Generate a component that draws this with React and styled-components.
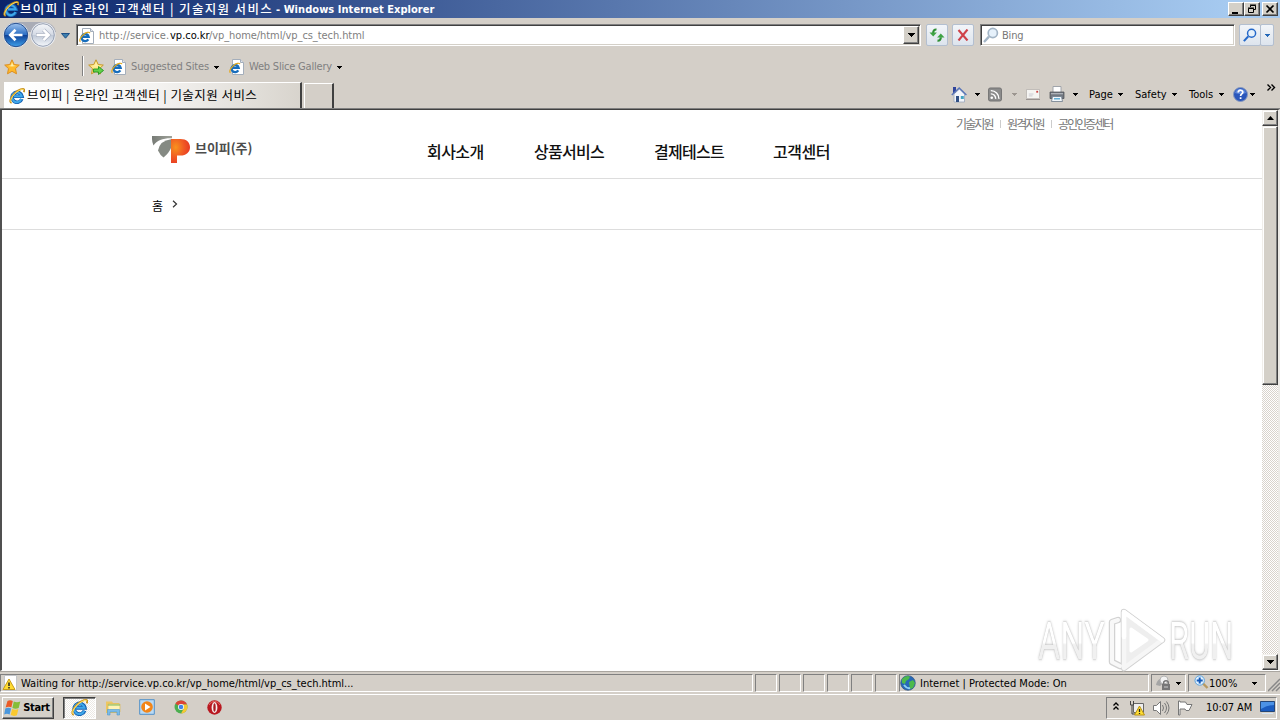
import React from "react";
import styled, { createGlobalStyle } from "styled-components";

const Global = createGlobalStyle`
  * { box-sizing: border-box; }
  html, body { margin: 0; padding: 0; overflow: hidden; }
  body { font-family: "DejaVu Sans Condensed", "DejaVu Sans", "Noto Sans CJK KR", sans-serif; font-stretch: condensed; font-size: 11px; color: #000; }
  svg { display: block; flex: none; }
`;

const Window = styled.div`
  width: 1280px; height: 720px; display: flex; flex-direction: column;
  background: #d4cfc8; overflow: hidden;
`;
const Label = styled.span`
  display: block; flex: none; white-space: nowrap;
  width: ${p => p.$w}px; margin-left: ${p => p.$ml || 0}px; padding-top: ${p => p.$pt ?? 2}px;
  line-height: 14px; font-size: ${p => p.$size || 11}px;
  letter-spacing: ${p => p.$ls || 0}px; color: ${p => p.$color || "#000"};
  font-weight: ${p => p.$weight || 400};
`;
const Korean = styled(Label)`
  padding-top: ${p => p.$pt || 0}px;
  font-family: "Noto Sans CJK KR", sans-serif;
`;
const Slot = styled.div`
  flex: none; margin-left: ${p => p.$ml || 0}px; margin-top: ${p => p.$mt || 0}px;
`;

/* ---------- title bar ---------- */
const TitleBar = styled.div`
  height: 18px; flex: none; display: flex; align-items: center; padding: 0 2px 0 3px;
  background: linear-gradient(90deg, #0a246a 0%, #a6caf0 96%);
`;
const Caption = styled.button`
  width: 16px; height: 14px; flex: none; padding: 0; display: flex; align-items: center; justify-content: center;
  background: #d4d0c8; border: 1px solid; border-color: #fff #404040 #404040 #fff;
  box-shadow: inset -1px -1px #808080; margin-left: ${p => p.$ml || 0}px;
`;

/* ---------- navigation ---------- */
const NavBar = styled.div`height: 34px; flex: none; display: flex; align-items: center; padding-left: 2px;`;
const Field = styled.div`
  height: 22px; flex: none; width: ${p => p.$w}px; margin-left: ${p => p.$ml}px;
  display: flex; align-items: center; background: #fff; border: 1px solid;
  border-color: #808080 #fff #fff #808080; box-shadow: inset 1px 1px #404040, inset -1px -1px #d4d0c8;
  padding-left: 3px;
`;
const DropButton = styled.button`
  width: 16px; height: 18px; padding: 0; flex: none; margin-left: auto; margin-right: 1px;
  display: flex; align-items: center; justify-content: center; background: #d4d0c8;
  border: 1px solid; border-color: #fff #404040 #404040 #fff; box-shadow: inset -1px -1px #808080;
`;
const SoftButton = styled.button`
  width: ${p => p.$w || 22}px; height: 22px; flex: none; padding: 0; margin-left: ${p => p.$ml || 0}px;
  display: flex; align-items: center; justify-content: center; border: 1px solid #b3bfd0;
  border-radius: 2px; background: linear-gradient(#f2f5f9, #dde4ed);
`;

/* ---------- favourites and tabs ---------- */
const FavBar = styled.div`height: 28px; flex: none; display: flex; align-items: center; padding-left: 4px;`;
const Divider = styled.div`width: 2px; height: 20px; margin-left: ${p => p.$ml}px; border-left: 1px solid #808080; border-right: 1px solid #fff;`;
const TabBar = styled.div`height: 29px; flex: none; display: flex; align-items: flex-end; border-bottom: 1px solid #808080; padding-left: 4px;`;
const Tab = styled.div`
  width: 298px; height: 26px; flex: none; display: flex; align-items: center; padding-left: 5px;
  background: linear-gradient(90deg, #fff 0%, #f5f4f2 50%, #d8d4cd 100%);
  border-top: 1px solid #fff; border-right: 2px solid #404040;
`;
const NewTab = styled.div`
  width: 30px; height: 25px; margin-left: 2px; flex: none; border: 1px solid #fff; border-bottom: 0; border-right: 2px solid #404040;
`;
const Commands = styled.div`height: 28px; display: flex; align-items: center; margin-left: 617px;`;

/* ---------- page ---------- */
const Viewport = styled.div`
  height: 562px; flex: none; display: flex; position: relative; border-left: 2px solid #505050;
  border-top: 1px solid #404040; border-bottom: 1px solid #fff; border-right: 2px solid #eceae6;
`;
const Page = styled.main`width: 1260px; flex: none; background: #fff;`;
const Header = styled.header`height: 69px; display: flex; border-bottom: 1px solid #ddd; padding-left: 150px;`;
const Brand = styled.div`display: flex; align-items: center; height: 28px; margin-top: 25px; width: 275px;`;
const Menu = styled.nav`display: flex; margin-top: 29px; height: 24px; align-items: center; width: 529px;`;
const Links = styled.div`display: flex; align-items: center; height: 16px; margin-top: 6px;`;
const Bar = styled.i`width: 1px; height: 8px; background: #ccc; margin: -1px 0 0 ${p => p.$ml}px;`;
const Crumbs = styled.div`height: 51px; display: flex; align-items: center; border-bottom: 1px solid #ddd; padding: 3px 0 0 150px;`;
const Scroll = styled.div`
  width: 16px; flex: none; display: flex; flex-direction: column; justify-content: space-between;
  background: repeating-conic-gradient(#fff 0 25%, #d9d3cc 0 50%) 0 0 / 2px 2px;
`;
const ScrollButton = styled.button`
  width: 16px; height: 16px; padding: 0; display: flex; align-items: center; justify-content: center;
  background: #d4d0c8; border: 1px solid; border-color: #f4f2ee #404040 #404040 #f4f2ee; box-shadow: inset -1px -1px #808080, inset 1px 1px #fff;
`;
const Thumb = styled.div`
  height: 259px; background: #d4d0c8; border: 1px solid; border-color: #f0eeea #404040 #404040 #f0eeea;
  box-shadow: inset -1px -1px #808080, inset 1px 1px #fff;
`;
const Watermark = styled.div`
  position: absolute; left: 1036px; top: 497px; width: 200px; height: 66px; display: flex; align-items: center;
`;
const MarkBox = styled.div`width: ${p => p.$w}px; flex: none; margin-left: ${p => p.$ml || 0}px;`;
const MarkWord = styled.div`
  width: max-content; padding-top: 3px; font: 400 51px/40px Roboto, sans-serif; white-space: nowrap;
  filter: drop-shadow(0 0 1px #bdbdbd) drop-shadow(0 0 1.500px #d0d0d0); transform: scaleX(${p => p.$sx}); transform-origin: 0 50%;
  background: linear-gradient(#fff 55%, #f0f0f0 60%); background-clip: text; -webkit-text-fill-color: transparent;
`;

/* ---------- status and task bars ---------- */
const StatusBar = styled.div`height: 23px; flex: none; display: flex; align-items: center; border-top: 1px solid #aaa6a0;`;
const Panel = styled.div`
  width: ${p => p.$w}px; height: 18px; flex: none; margin-right: 2px; display: flex; align-items: center;
  border: 1px solid; border-color: #808080 #fff #fff #808080;
`;
const TaskBar = styled.div`height: 26px; flex: none; display: flex; align-items: center; border-top: 1px solid #fff; padding-left: 2px;`;
const Start = styled.button`
  width: 52px; height: 22px; padding: 0 0 0 1px; flex: none; display: flex; align-items: center; color: #000; font: inherit;
  background: #d4d0c8; border: 1px solid; border-color: #fff #404040 #404040 #fff; box-shadow: inset -1px -1px #808080;
`;
const ActiveTask = styled.div`
  width: 33px; height: 22px; margin-left: 9px; display: flex; align-items: center; justify-content: center;
  border: 1px solid; border-color: #404040 #fff #fff #404040; box-shadow: inset 1px 1px #808080;
  background: repeating-conic-gradient(#fff 0 25%, #ece9e4 0 50%) 0 0 / 2px 2px;
`;
const Tray = styled.div`
  width: 171px; height: 22px; margin-left: 884px; display: flex; flex: none; align-items: center; border: 1px solid; border-color: #808080 #fff #fff #808080;
`;

/* ---------- drawings ---------- */
const Down = ({ color = "#000" }) => (
  <svg width="7" height="4" viewBox="0 0 7 4" shapeRendering="crispEdges"><path d="M1 1h5v1H1zM2 2h3v1H2zM3 3h1v1H3z" fill={color} /></svg>
);
const Wedge = () => (
  <svg width="7" height="4" viewBox="0 0 7 4" shapeRendering="crispEdges"><path d="M0 0h7v1H0zM1 1h5v1H1zM2 2h3v1H2zM3 3h1v1H3z" /></svg>
);
const IE = ({ s = 16 }) => (
  <svg width={s} height={s} viewBox="0 0 16 16" fill="none">
    <path d="M12.800 11A5 5 0 1 1 13 8.300H5" stroke="#1663b4" strokeWidth="3.600" />
    <path d="M12.400 11.200A4.900 4.900 0 1 1 12.700 8.300H5" stroke="#3fa8ea" strokeWidth="1.900" />
    <path d="M2.600 14.900C-.5 14 2.200 8.700 5.800 5.100 9.500 1.600 14.300-.2 15.200 1.600c.2.800-.1 1.800-.5 2.600" stroke="#c88f18" strokeWidth="1.700" />
    <path d="M2.200 14.300C1 12.700 2.600 9 5.800 5.700 9 2.600 13.400.7 14.700 1.500" stroke="#ffe36a" strokeWidth="1" />
  </svg>
);
const PageIE = () => (
  <svg width="16" height="16" viewBox="0 0 16 16" fill="none">
    <path d="M3.500.5h8l3 3v12h-11z" fill="#fff" stroke="#a4aebb" /><path d="M11.500.5v3h3" fill="#dfe5ee" stroke="#a4aebb" />
    <path d="M9.300 11.400A3.600 3.600 0 1 1 9.700 8.900H3.600" stroke="#176dbc" strokeWidth="2.300" />
    <path d="M1.500 13.600C-.2 13 1.500 9 4.300 6.700 7 4.400 10.400 3.400 10.900 5.200" stroke="#e4a91d" strokeWidth="1.200" />
  </svg>
);
const Back = () => (
  <svg width="64" height="28" viewBox="0 0 64 28">
    <defs>
      <linearGradient id="bk" x2="0" y2="1"><stop stopColor="#9fc3ee" /><stop offset=".48" stopColor="#2d6fc4" /><stop offset=".52" stopColor="#0f4399" /><stop offset="1" stopColor="#3fa0ea" /></linearGradient>
      <linearGradient id="fw" x2="0" y2="1"><stop stopColor="#f5f7fa" /><stop offset=".5" stopColor="#d3d9e4" /><stop offset=".52" stopColor="#c1cad8" /><stop offset="1" stopColor="#f4f7fb" /></linearGradient>
    </defs>
    <path d="M13 1H42Q52 2 54 11H2Q4 2 13 1z" fill="#a9acb6" />
    <circle cx="14" cy="14" r="12.600" fill="#e7edf5" /><circle cx="14" cy="14" r="11.700" fill="url(#bk)" stroke="#264e8e" />
    <circle cx="41" cy="14" r="12.500" fill="#eef1f6" /><circle cx="41" cy="14" r="11.300" fill="url(#fw)" stroke="#949eb1" />
    <path d="M20.500 14H9M13.500 8.800 8.300 14l5.200 5.200" fill="none" stroke="#fff" strokeWidth="2.700" />
    <path d="M34 14h12M41.500 8.800 46.700 14l-5.200 5.200" fill="none" stroke="#a9b1c1" strokeWidth="3.800" />
    <path d="M34.500 14H46M41.500 8.800 46.700 14l-5.200 5.200" fill="none" stroke="#fff" strokeWidth="2.500" />
  </svg>
);
const Star = ({ add }) => (
  <svg width="16" height="16" viewBox="0 0 16 16">
    <path d="M8 .8l2.200 4.700 5.100.6-3.800 3.500 1 5.200L8 12.300l-4.500 2.500 1-5.200L.7 6.100l5.100-.6z" fill={add ? "#ffe98a" : "#ffb92a"} stroke={add ? "#c69728" : "#dc8f22"} />
    <path d="M8 3l1.200 3.300 3 .6-4.200.6-4-.6 3-.6z" fill="#fff0a8" />
    {add && <path d="M5.500 10h5V7.500l5 4-5 4V13h-5z" fill="#62d14a" stroke="#249521" strokeWidth=".9" />}
  </svg>
);
const Glass = ({ color = "#2468c9", s = 16, fill = "#e6f1fb" }) => (
  <svg width={s} height={s} viewBox="0 0 16 16"><path d="M1 15l5-5.400" stroke={color} strokeWidth="2.400" /><circle cx="9.800" cy="6" r="4.600" fill={fill} stroke={color} strokeWidth="1.700" /></svg>
);
const Refresh = () => (
  <svg width="16" height="14" viewBox="0 0 16 14" fill="none" stroke="#2f8f35" strokeWidth="2.200">
    <path d="M7.500 1.500C5.500 1.300 4.200 2.500 4.200 5" /><path d="M.5 4.500h7.400L4.200 8.500z" fill="#3fa344" stroke="none" />
    <path d="M8.500 12.700c2 .2 3.300-1 3.300-3.500" /><path d="M8.100 9.500h7.400l-3.700-4z" fill="#3fa344" stroke="none" />
  </svg>
);
const Stop = () => <svg width="12" height="12" viewBox="0 0 12 12"><path d="M1.500 1l9 10.500M10.500.5L1.500 11.500" stroke="#cf4249" strokeWidth="2.100" /></svg>;
const Home = () => (
  <svg width="16" height="17" viewBox="0 0 16 17">
    <path d="M2 1h3v6H2z" fill="#30459c" /><path d="M3 8l5.500-5 5 5v8H3z" fill="#f3f6fb" stroke="#9aa7bd" strokeWidth=".8" />
    <path d="M.8 9L8.200 2l7.200 7" fill="none" stroke="#5a76b8" strokeWidth="1.500" /><path d="M5 10h3v6H5z" fill="#304f84" /><path d="M9.800 10h3v3h-3z" fill="#44a5c2" />
  </svg>
);
const Rss = () => (
  <svg width="14" height="15" viewBox="0 0 15 15" fill="none"><rect x=".5" y=".5" width="14" height="14" rx="2" fill="#8b8b8b" stroke="#717171" /><circle cx="4" cy="11" r="1.400" fill="#fff" /><path d="M3 6.800a5 5 0 0 1 5.200 5.400M3 3.400a8.500 8.500 0 0 1 8.700 8.800" stroke="#fff" strokeWidth="1.500" /></svg>
);
const Mail = () => (
  <svg width="14" height="11" viewBox="0 0 15 12" preserveAspectRatio="none"><path d="M.5.5h14v10H.5z" fill="#f5f4f2" stroke="#bcb7b4" /><path d="M0 11.500h15" stroke="#918c88" /><path d="M3 5.500h5M3 7.500h4" stroke="#c8c8d0" /><path d="M11 2h2v2h-2z" fill="#ca4444" /></svg>
);
const Printer = () => (
  <svg width="16" height="16" viewBox="0 0 16 16"><path d="M4 .5h8V7H4z" fill="#fff" stroke="#a0a4aa" /><path d="M1 6h14v6.500H1z" fill="#737880" stroke="#474b52" strokeWidth=".7" /><path d="M2 7h12v1.300H2z" fill="#aeb2b8" /><path d="M3.500 10.500h9l1 5h-11z" fill="#f2f7fb" stroke="#6e7c8c" strokeWidth=".8" /><path d="M5 12.800h6" stroke="#4ca3cf" strokeWidth="1.300" /></svg>
);
const Help = () => (
  <svg width="15" height="15" viewBox="0 0 15 15"><circle cx="7.500" cy="7.500" r="7" fill="#2b57bb" stroke="#8799bf" /><path d="M2 6a5.700 5.700 0 0 1 11 0q-5.500 2-11 0" fill="#5c86db" /><path d="M5.200 5.400c0-3 4.900-2.800 4.600 0-.1 1.500-2.200 1.700-2.200 3.500M7.600 10.300v1.800" fill="none" stroke="#fff" strokeWidth="1.700" /></svg>
);
const Logo = () => (
  <svg width="38" height="28" viewBox="0 0 38 28">
    <defs>
      <radialGradient id="lp" cx=".25" cy=".35" r=".85"><stop stopColor="#f7931e" /><stop offset=".5" stopColor="#f15a24" /><stop offset="1" stopColor="#e42f23" /></radialGradient>
      <linearGradient id="lg"><stop stopColor="#777b76" /><stop offset="1" stopColor="#a0a39b" /></linearGradient>
    </defs>
    <path d="M0 1h20v2.200C11 3 5 5 1.500 10.500Q0 7 0 4z" fill="url(#lg)" />
    <path d="M6 15.500Q8 5.500 19 4.300V13Q17 18 11.500 22.500 8 20 6 15.500z" fill="#858a83" />
    <path d="M19 4h9.500c6 0 9.500 3.500 9.500 8.200 0 5-4 8.300-9.500 8.300H25V28h-6z" fill="url(#lp)" />
  </svg>
);
const PlayMark = () => (
  <svg width="58" height="66" viewBox="0 0 58 66" fill="none" strokeLinejoin="round" strokeLinecap="round">
    <g stroke="#d2d2d2" strokeWidth="6.500"><path d="M12 59L4 55V15l6-2" /><path d="M16 5l38 28-38 28z" /></g>
    <path d="M24 22l15 11-15 11z" stroke="#dedede" strokeWidth="5" />
    <path d="M16 5l38 28-38 28z" fill="#eee" />
    <path d="M12 59L4 55V15l6-2" stroke="#f8f8f8" strokeWidth="4" />
    <path d="M16 5l38 28-38 28z" stroke="#f6f6f6" strokeWidth="4.500" />
    <path d="M16 30V5l38 28" stroke="#fff" strokeWidth="4.500" />
    <path d="M23 22l16 11-16 11z" fill="#fff" stroke="#fff" strokeWidth="3" />
  </svg>
);
const Warn = () => (
  <svg width="16" height="16" viewBox="0 0 16 16"><path d="M2.500.5h12v15h-12z" fill="#fff" stroke="#c3c5c9" /><path d="M7 4l6 10.500H1z" fill="#ffdc32" stroke="#c79b18" /><path d="M7 7.500v3.500M7 12v1.500" stroke="#222" strokeWidth="1.500" /></svg>
);
const Globe = () => (
  <svg width="16" height="16" viewBox="0 0 16 16"><circle cx="8" cy="8" r="7.300" fill="#2669b7" stroke="#38557c" strokeWidth=".7" /><path d="M2 4q4-4 8-2.500L9 4 6 6l-1 3-3-1zM9 7l4-2 2 3-2 5-3 1z" fill="#4dba4c" /><path d="M4 10q3 4 6 3" stroke="#8fd0f2" strokeWidth="2" fill="none" /></svg>
);
const Lock = () => (
  <svg width="16" height="16" viewBox="0 0 16 16"><path d="M1 10C2 4 6 3 9 3l2 3-6 5z" fill="#a5a5a5" /><circle cx="9" cy="5" r="4" fill="#f2f2f2" stroke="#b4b4b4" /><path d="M7 9h8v6H7z" fill="#777" /><path d="M8.700 9.500V7q2.300-2.500 4.600 0v2.500" fill="none" stroke="#777" strokeWidth="1.500" /><path d="M9 12h4" stroke="#ccc" /></svg>
);
const Zoom = () => (
  <svg width="15" height="15" viewBox="0 0 15 15"><path d="M9 8.500l4.500 4.500" stroke="#b89a61" strokeWidth="2.400" /><circle cx="5.700" cy="5.500" r="4.700" fill="#dff0ff" stroke="#5ba3df" /><path d="M5.700 2.500v6M2.700 5.500h6" stroke="#1459b8" strokeWidth="2" /></svg>
);
const StartFlag = () => (
  <svg width="17" height="18" viewBox="0 0 17 18"><path d="M3.500 2Q6 .6 8.800 2L7.400 8.200Q4.500 7 1.600 8.400z" fill="#ea5a26" /><path d="M9.800 2.500q3 1.500 6.500 0L14.700 9q-3.200 1.500-6.300-.1z" fill="#86bd38" /><path d="M1.300 9.500q3-1.300 5.800 0l-1.500 6q-2.700-1.400-5.400 0z" fill="#4a97dc" /><path d="M8.100 10q3.200 1.600 6.300.1l-1.500 6.100q-3 1.500-6.200-.1z" fill="#fac92f" /></svg>
);
const Folder = () => (
  <svg width="16" height="16" viewBox="0 0 16 16"><path d="M1 1.500h6l1 1.500h6v10H1z" fill="#edc762" /><path d="M3 4h12v8H3z" fill="#fff3b5" stroke="#d9b759" strokeWidth=".7" /><path d="M3 5h12" stroke="#7ab75b" /><path d="M2.500 15V9.500h12V15H12v-3H5v3z" fill="#7bbbe8" stroke="#4d97cc" strokeWidth=".6" /></svg>
);
const Player = () => (
  <svg width="16" height="16" viewBox="0 0 16 16"><path d="M.7.700h14.600v14.600H.7z" fill="#b9daf5" stroke="#5290c8" /><circle cx="8" cy="8" r="5.800" fill="#f28519" /><path d="M6 4.500v7L11.500 8z" fill="#fff" /></svg>
);
const Chrome = () => (
  <svg width="14" height="14" viewBox="0 0 14 14"><circle cx="7" cy="7" r="6.500" fill="#4cae50" /><path d="M7 7L1.400 3.700A6.500 6.500 0 0 1 13 4.500H7z" fill="#dc4437" /><path d="M7 13.500A6.500 6.500 0 0 0 13 4.500H8L9.500 9z" fill="#f6c834" /><circle cx="7" cy="7" r="3" fill="#fff" /><circle cx="7" cy="7" r="2.300" fill="#4285e8" /></svg>
);
const Opera = () => (
  <svg width="15" height="15" viewBox="0 0 15 15"><circle cx="7.500" cy="7.500" r="7.200" fill="#b91820" /><path d="M2 5a6 6 0 0 1 11 0" stroke="#e46a63" fill="none" /><ellipse cx="7.500" cy="7.500" rx="2.900" ry="5.400" fill="#f7eeee" /><ellipse cx="7.500" cy="7.500" rx="1.200" ry="4.300" fill="#a81c22" /></svg>
);
const Net = () => (
  <svg width="16" height="16" viewBox="0 0 16 16"><path d="M4.500 3.500h10v9h-10z" fill="#eee" stroke="#666" /><path d="M1.500 1v4h3V1M3 5v9h3" fill="none" stroke="#444" /><path d="M10.500 6l5 9h-10z" fill="#ffde33" stroke="#b99215" /><path d="M10.500 9v3M10.500 13v1" stroke="#222" strokeWidth="1.300" /></svg>
);
const Sound = () => (
  <svg width="17" height="16" viewBox="0 0 17 16" fill="none" stroke="#777"><path d="M.500 5.500h3l4-4v13l-4-4h-3z" fill="#fff" /><path d="M9.500 5q2 3 0 6M11.500 3q4 5 0 10M13.500 1.500q5 6.500 0 13" /></svg>
);
const ActionFlag = () => (
  <svg width="16" height="16" viewBox="0 0 16 16"><path d="M1.500 1v14h1.500V9h5l1 1.500h3l3-6h-5L8.500 2H3V1z" fill="#fff" stroke="#777" /></svg>
);
const Desktop = () => (
  <svg width="15" height="14" viewBox="0 0 16 14" preserveAspectRatio="none"><path d="M.500.500h15v10H.500z" fill="#1b5cc0" stroke="#214375" /><path d="M1 1h14v3Q8 4 1 8z" fill="#4c92e6" /><path d="M2 12.500h12" stroke="#d6e6f6" /></svg>
);

export default function App() {
  const title = "브이피 | 온라인 고객센터 | 기술지원 서비스";
  return (
    <Window>
      <Global />
      <TitleBar>
        <IE />
        <Korean $w={252} $ml={1} $pt={0} $size={12.5} $ls={1.35} $weight={500} $color="#fff">{title}</Korean>
        <Label $w={160} $ml={4} $pt={1} $weight={700} $ls={0.05} $color="#fff">- Windows Internet Explorer</Label>
        <Caption $ml={792}><svg width="10" height="10"><path d="M1 8h6v2H1z" /></svg></Caption>
        <Caption><svg width="10" height="10" fill="none" stroke="#000"><path d="M3.500 3V1.500h5v4H7M3 1h6M1.500 4.500h5v4h-5zM1 4h6" /></svg></Caption>
        <Caption $ml={2}><svg width="10" height="10"><path d="M1.500 1.500l7 7M8.500 1.500l-7 7" stroke="#000" strokeWidth="1.700" /></svg></Caption>
      </TitleBar>

      <NavBar>
        <Back />
        <Slot $ml={-5} $mt={1}><svg width="9" height="6"><path d="M.500.500h8L4.500 5.200z" fill="#3d7fae" stroke="#1d4f86" /></svg></Slot>
        <Field $w={845} $ml={6}>
          <Slot $ml={-1} $mt={1}><PageIE /></Slot>
          <Label $w={71} $ml={4} $ls={0.08} $color="#808080">http://service.</Label>
          <Label $w={39}>vp.co.kr</Label>
          <Label $w={160} $ls={-0.08} $color="#808080">/vp_home/html/vp_cs_tech.html</Label>
          <DropButton><Wedge /></DropButton>
        </Field>
        <SoftButton $ml={5}><Refresh /></SoftButton>
        <SoftButton $ml={4}><Stop /></SoftButton>
        <Field $w={255} $ml={6}>
          <Slot $ml={-1}><Glass color="#a3b5c6" /></Slot>
          <Label $w={30} $ml={3} $ls={-0.2} $color="#777">Bing</Label>
        </Field>
        <SoftButton $ml={4} $w={22}><Glass s={14} /></SoftButton>
        <SoftButton $ml={-1} $w={14}><Down color="#2468b8" /></SoftButton>
      </NavBar>

      <FavBar>
        <Slot $mt={1}><Star /></Slot>
        <Label $w={58} $ml={4} $pt={1} $ls={0.1}>Favorites</Label>
        <Divider $ml={0} />
        <Slot $ml={4} $mt={1}><Star add /></Slot>
        <Slot $ml={7} $mt={1}><PageIE /></Slot>
        <Label $w={82} $ml={4} $ls={-0.12} $color="#808080">Suggested Sites</Label>
        <Slot $mt={1}><Down /></Slot>
        <Slot $ml={9} $mt={1}><PageIE /></Slot>
        <Label $w={87} $ml={4} $ls={-0.2} $color="#808080">Web Slice Gallery</Label>
        <Slot $mt={1}><Down /></Slot>
      </FavBar>

      <TabBar>
        <Tab><IE /><Slot $mt={-2}><Korean $w={240} $ml={2} $size={12.5} $ls={0.45}>{title}</Korean></Slot></Tab>
        <NewTab />
        <Commands>
          <Home />
          <Slot $ml={7}><Down /></Slot>
          <Slot $ml={7} $mt={1}><Rss /></Slot>
          <Slot $ml={9}><Down color="#9c9690" /></Slot>
          <Slot $ml={8}><Mail /></Slot>
          <Slot $ml={9}><Printer /></Slot>
          <Slot $ml={7}><Down /></Slot>
          <Label $w={28} $ml={10}>Page</Label><Down />
          <Label $w={36} $ml={11}>Safety</Label><Down />
          <Label $w={29} $ml={11}>Tools</Label><Down />
          <Slot $ml={8} $mt={1}><Help /></Slot>
          <Slot $ml={1}><Down /></Slot>
          <Slot $ml={11} $mt={-13}><svg width="9" height="7" fill="none" stroke="#000" strokeWidth="1.400"><path d="M.500.500l3 3-3 3M4.500.500l3 3-3 3" /></svg></Slot>
        </Commands>
      </TabBar>

      <Viewport>
        <Page>
          <Header>
            <Brand><Logo /><Slot $mt={-2}><Korean $w={60} $ml={5} $size={13} $weight={700} $ls={-0.05} $color="#4d4d4d">브이피(주)</Korean></Slot></Brand>
            <Menu>
              <Korean $w={107} $size={16} $weight={500} $ls={-0.55} $color="#111">회사소개</Korean>
              <Korean $w={120} $size={16} $weight={500} $ls={-0.7} $color="#111">상품서비스</Korean>
              <Korean $w={119} $size={16} $weight={500} $ls={-0.7} $color="#111">결제테스트</Korean>
              <Korean $w={60} $size={16} $weight={500} $ls={-0.5} $color="#111">고객센터</Korean>
            </Menu>
            <Links>
              <Korean $w={38} $size={12} $ls={-1.9} $color="#777">기술지원</Korean>
              <Bar $ml={6} />
              <Korean $w={38} $ml={6} $size={12} $ls={-1.9} $color="#777">원격지원</Korean>
              <Bar $ml={6} />
              <Korean $w={60} $ml={6} $size={12} $ls={-2} $color="#777">공인인증센터</Korean>
            </Links>
          </Header>
          <Crumbs>
            <Korean $w={12} $size={12}>홈</Korean>
            <Slot $ml={8} $mt={-3}><svg width="6" height="8" fill="none" stroke="#333" strokeWidth="1.200"><path d="M1 .800l3.500 3.200L1 7.200" /></svg></Slot>
          </Crumbs>
        </Page>
        <Scroll>
          <div>
            <ScrollButton><svg width="7" height="4"><path d="M0 4h7L3.500 0z" /></svg></ScrollButton>
            <Thumb />
          </div>
          <ScrollButton><Wedge /></ScrollButton>
        </Scroll>
        <Watermark>
          <MarkBox $w={70}><MarkWord $sx={0.67}>ANY</MarkWord></MarkBox>
          <PlayMark />
          <MarkBox $w={64} $ml={3}><MarkWord $sx={0.64}>RUN</MarkWord></MarkBox>
        </Watermark>
      </Viewport>

      <StatusBar>
        <Panel $w={753}><Slot $ml={1}><Warn /></Slot><Label $w={340} $ml={3}>Waiting for http://service.vp.co.kr/vp_home/html/vp_cs_tech.html...</Label></Panel>
        {[0, 1, 2, 3, 4, 5].map(i => <Panel key={i} $w={22} />)}
        <Panel $w={250}><Globe /><Label $w={160} $ml={4}>Internet | Protected Mode: On</Label></Panel>
        <Panel $w={35}><Slot $ml={3}><Lock /></Slot><Slot $ml={4}><Down /></Slot></Panel>
        <Panel $w={78}><Slot $ml={5} $mt={-1}><Zoom /></Slot><Label $w={42}>100%</Label><Down /></Panel>
        <svg width="12" height="18" stroke="#888" strokeWidth="1.500"><path d="M0 17L12 5M4 17l8-8M8 17l4-4" /></svg>
      </StatusBar>

      <TaskBar>
        <Start><StartFlag /><Label $w={31} $pt={0} $weight={700} $ls={-0.35}>Start</Label></Start>
        <ActiveTask><IE s={17} /></ActiveTask>
        <Slot $ml={9}><Folder /></Slot>
        <Slot $ml={18} $mt={-1}><Player /></Slot>
        <Slot $ml={19} $mt={-1}><Chrome /></Slot>
        <Slot $ml={19}><Opera /></Slot>
        <Tray>
          <Slot $ml={6} $mt={-2}><svg width="6" height="9" fill="none" stroke="#000" strokeWidth="1.300"><path d="M.500 3.500L3 1l2.500 2.500M.500 7.500L3 5l2.500 2.500" /></svg></Slot>
          <Slot $ml={10}><Net /></Slot>
          <Slot $ml={8}><Sound /></Slot>
          <Slot $ml={7}><ActionFlag /></Slot>
          <Label $w={47} $ml={13} $pt={0} $ls={-0.1}>10:07 AM</Label>
          <Slot $ml={7}><Desktop /></Slot>
        </Tray>
      </TaskBar>
    </Window>
  );
}
